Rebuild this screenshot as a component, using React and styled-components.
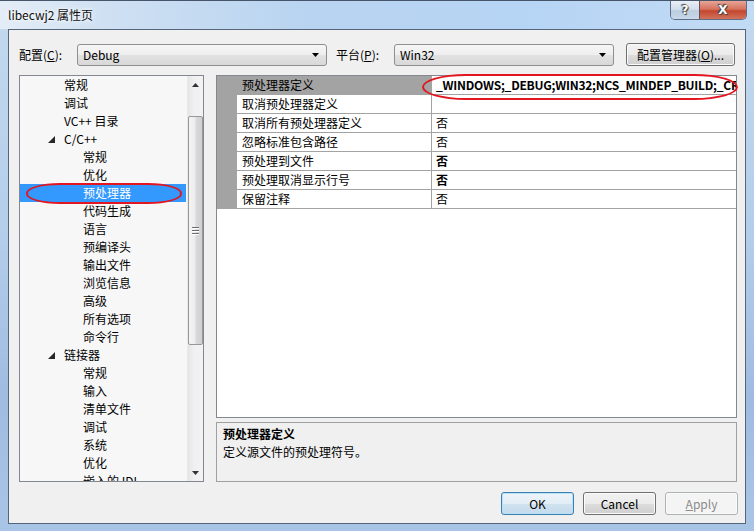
import React from 'react'
import styled, { createGlobalStyle } from 'styled-components'

const GlobalStyle = createGlobalStyle`
  html, body { margin: 0; padding: 0; background: #fff; }
  body {
    font-family: "Noto Sans CJK SC", "Noto Sans", sans-serif;
    font-size: 12px;
    color: #000;
  }
  * { box-sizing: border-box; }
`

const Window = styled.div`
  width: 754px;
  height: 531px;
  display: flex;
  flex-direction: column;
  padding: 0 8px 7px 8px;
  overflow: hidden;
  border-top: 1px solid #46556a;
  background: linear-gradient(180deg, #c4d9ef 0%, #b3cdea 45%, #9fbbe0 75%, #a9c5e6 100%);
`

const TitleBar = styled.div`
  height: 28px;
  margin: 0 -8px;
  padding-left: 8px;
  display: flex;
  justify-content: space-between;
  align-items: flex-start;
  background: linear-gradient(90deg, #e4edf7 0%, #cfe0f2 14%, #b9d4f1 40%, #b6d4f4 70%, #c2dbf5 100%);
`

const Caption = styled.div`
  line-height: 28px;
  font-size: 12px;
  color: #101010;
  text-shadow: 0 0 6px #fff, 0 0 3px #fff;
`

const Controls = styled.div`
  display: flex;
  margin-right: 7px;
  height: 19px;
  border: 1px solid #5d6e86;
  border-top: none;
  border-radius: 0 0 5px 5px;
  overflow: hidden;
`

const CtrlButton = styled.div`
  width: ${p => p.$w}px;
  display: flex;
  align-items: center;
  justify-content: center;
  font-family: "DejaVu Sans", sans-serif;
  font-weight: bold;
  color: #fff;
  font-size: ${p => p.$fs}px;
  text-shadow: 0 0 1px #333, 1px 1px 1px #444, -1px -1px 1px #444;
  background: ${p => p.$close
    ? 'linear-gradient(180deg, #e7a597 0%, #d6735e 45%, #c4462f 55%, #d2735d 100%)'
    : 'linear-gradient(180deg, #e8eef5 0%, #d3dfec 45%, #bccde0 55%, #c9d8ea 100%)'};
  border-left: ${p => p.$close ? '1px solid #6a4e55' : 'none'};
`

const Client = styled.div`
  flex: 1;
  display: flex;
  flex-direction: column;
  background: #f0f0f0;
  border: 1px solid #56667a;
  padding: 13px 7px 0 10px;
`

const TopRow = styled.div`
  display: flex;
  align-items: center;
  height: 23px;
`

const Label = styled.div`
  width: 58px;
  margin-left: ${p => p.$ml || 0}px;
  u { text-decoration: underline; }
`

const Combo = styled.div`
  width: ${p => p.$w}px;
  height: 22px;
  display: flex;
  align-items: center;
  justify-content: space-between;
  padding: 0 7px 0 5px;
  border: 1px solid #8e8f8f;
  border-radius: 3px;
  background: linear-gradient(180deg, #f6f6f6 0%, #eeeeee 50%, #e2e2e2 51%, #d8d8d8 100%);
  font-family: "Noto Sans CJK SC", "Noto Sans", sans-serif;
`

const Arrow = ({ down = true, color = '#000' }) => (
  <svg width="7" height="4" viewBox="0 0 7 4">
    <polygon points={down ? '0,0 7,0 3.5,4' : '0,4 7,4 3.5,0'} fill={color} />
  </svg>
)

const PushButton = styled.button`
  width: ${p => p.$w || 73}px;
  height: 23px;
  margin-left: ${p => p.$ml || 0}px;
  padding: 0;
  font-family: "Noto Sans CJK SC", "Noto Sans", sans-serif;
  font-size: 12px;
  color: ${p => p.$disabled ? '#8b8b8b' : '#000'};
  border: 1px solid ${p => p.$default ? '#3c7fb1' : p.$disabled ? '#adb2b5' : '#707070'};
  border-radius: 3px;
  box-shadow: inset 0 0 0 1px ${p => p.$default ? '#b7e2f7' : '#fbfbfb'};
  background: ${p => p.$disabled
    ? '#f4f4f4'
    : p.$default
      ? 'linear-gradient(180deg, #edf4f9 0%, #e2edf5 50%, #d0e2ef 51%, #c4dbec 100%)'
      : 'linear-gradient(180deg, #f2f2f2 0%, #ebebeb 50%, #dddddd 51%, #cfcfcf 100%)'};
  u { text-decoration: underline; }
`

const Main = styled.div`
  display: flex;
  margin-top: 9px;
  height: 407px;
`

const Tree = styled.div`
  position: relative;
  width: 185px;
  height: 100%;
  display: flex;
  border: 1px solid #828790;
  background: #f7f7f7;
`

const TreeList = styled.div`
  flex: 1;
  overflow: hidden;
`

const TreeRow = styled.div`
  height: 18px;
  line-height: 18px;
  display: flex;
  align-items: center;
  padding-left: ${p => (p.$level === 1 ? 44 : 63)}px;
  margin-right: 1px;
  white-space: nowrap;
  background: ${p => p.$selected ? '#3399ff' : 'transparent'};
  color: ${p => p.$selected ? '#fff' : '#000'};
`

const Caret = styled.svg`
  margin-left: -16px;
  margin-right: 9px;
`

const ScrollBar = styled.div`
  width: 16px;
  display: flex;
  flex-direction: column;
  align-items: center;
  background: linear-gradient(90deg, #e5e5e5 0%, #f0f0f0 40%, #f2f2f2 100%);
  border-left: 1px solid #e9e9e9;
`

const ScrollArrow = styled.div`
  height: 17px;
  width: 100%;
  display: flex;
  align-items: center;
  justify-content: center;
`

const Thumb = styled.div`
  margin-top: 23px;
  width: 15px;
  height: 229px;
  border: 1px solid #979797;
  border-radius: 2px;
  display: flex;
  flex-direction: column;
  align-items: center;
  justify-content: center;
  gap: 2px;
  background: linear-gradient(90deg, #f4f4f4 0%, #ececec 45%, #d9d9d9 55%, #cfcfcf 100%);
`

const Grip = styled.div`
  width: 7px;
  height: 1px;
  background: #6d6d6d;
  box-shadow: 0 1px 0 #fff;
`

const Filler = styled.div`
  flex: 1;
`

const RightCol = styled.div`
  margin-left: 12px;
  width: 521px;
  display: flex;
  flex-direction: column;
`

const Grid = styled.div`
  position: relative;
  height: 344px;
  border: 1px solid #828790;
  background: #fff;
`

const PropRow = styled.div`
  display: grid;
  grid-template-columns: 20px 195px 1fr;
  height: 19px;
`

const Gutter = styled.div`
  background: #a3a3a3;
`

const NameCell = styled.div`
  padding-left: 5px;
  line-height: 18px;
  border-bottom: 1px solid #a3a3a3;
  border-right: 1px solid #a3a3a3;
  background: ${p => p.$active ? '#a3a3a3' : '#fff'};
  white-space: nowrap;
`

const ValueCell = styled.div`
  padding-left: 4px;
  line-height: 18px;
  border-bottom: 1px solid #a3a3a3;
  font-weight: ${p => p.$bold ? 'bold' : 'normal'};
  letter-spacing: ${p => p.$tight ? '-0.25px' : 'normal'};
  white-space: nowrap;
  overflow: hidden;
`

const Ellipse = styled.div`
  position: absolute;
  left: ${p => p.$x}px;
  top: ${p => p.$y}px;
  width: ${p => p.$w}px;
  height: ${p => p.$h}px;
  border: 2px solid #e3161f;
  border-radius: ${p => p.$r};
  pointer-events: none;
`

const Description = styled.div`
  margin-top: 4px;
  height: 60px;
  border: 1px solid #a0a0a0;
  background: #f0f0f0;
  padding: 2px 6px 0;
  line-height: 18px;
`

const DescTitle = styled.div`
  font-weight: bold;
`

const ButtonRow = styled.div`
  display: flex;
  justify-content: flex-end;
  gap: 9px;
  margin-top: 10px;
`

const treeItems = [
  { label: '常规', level: 1 },
  { label: '调试', level: 1 },
  { label: 'VC++ 目录', level: 1 },
  { label: 'C/C++', level: 1, expanded: true },
  { label: '常规', level: 2 },
  { label: '优化', level: 2 },
  { label: '预处理器', level: 2, selected: true },
  { label: '代码生成', level: 2 },
  { label: '语言', level: 2 },
  { label: '预编译头', level: 2 },
  { label: '输出文件', level: 2 },
  { label: '浏览信息', level: 2 },
  { label: '高级', level: 2 },
  { label: '所有选项', level: 2 },
  { label: '命令行', level: 2 },
  { label: '链接器', level: 1, expanded: true },
  { label: '常规', level: 2 },
  { label: '输入', level: 2 },
  { label: '清单文件', level: 2 },
  { label: '调试', level: 2 },
  { label: '系统', level: 2 },
  { label: '优化', level: 2 },
  { label: '嵌入的 IDL', level: 2 },
]

const props = [
  { name: '预处理器定义', value: '_WINDOWS;_DEBUG;WIN32;NCS_MINDEP_BUILD;_CRT_SECURE_NO_WARNINGS', bold: true, active: true, tight: true },
  { name: '取消预处理器定义', value: '' },
  { name: '取消所有预处理器定义', value: '否' },
  { name: '忽略标准包含路径', value: '否' },
  { name: '预处理到文件', value: '否', bold: true },
  { name: '预处理取消显示行号', value: '否', bold: true },
  { name: '保留注释', value: '否' },
]

const App = () => {
  return (
    <>
      <GlobalStyle />
      <Window>
        <TitleBar>
          <Caption>libecwj2 属性页</Caption>
          <Controls>
            <CtrlButton $w={28} $fs={12}>?</CtrlButton>
            <CtrlButton $w={47} $fs={12} $close>X</CtrlButton>
          </Controls>
        </TitleBar>
        <Client>
          <TopRow>
            <Label>配置(<u>C</u>):</Label>
            <Combo $w={250}>
              <span>Debug</span>
              <Arrow />
            </Combo>
            <Label $ml={9}>平台(<u>P</u>):</Label>
            <Combo $w={220}>
              <span>Win32</span>
              <Arrow />
            </Combo>
            <PushButton $w={109} $ml={12}>配置管理器(<u>O</u>)...</PushButton>
          </TopRow>
          <Main>
            <Tree>
              <TreeList>
                {treeItems.map((item, i) => (
                  <TreeRow key={i} $level={item.level} $selected={item.selected}>
                    {item.expanded && (
                      <Caret width="7" height="7" viewBox="0 0 7 7">
                        <polygon points="7,0 7,7 0,7" fill="#262626" />
                      </Caret>
                    )}
                    {item.label}
                  </TreeRow>
                ))}
              </TreeList>
              <ScrollBar>
                <ScrollArrow><Arrow down={false} color="#333" /></ScrollArrow>
                <Thumb>
                  <Grip />
                  <Grip />
                  <Grip />
                </Thumb>
                <Filler />
                <ScrollArrow><Arrow color="#333" /></ScrollArrow>
              </ScrollBar>
              <Ellipse $x={6} $y={107} $w={156} $h={21} $r="34px / 10px" />
            </Tree>
            <RightCol>
              <Grid>
                {props.map((p, i) => (
                  <PropRow key={i}>
                    <Gutter />
                    <NameCell $active={p.active}>{p.name}</NameCell>
                    <ValueCell $bold={p.bold} $tight={p.tight}>{p.value}</ValueCell>
                  </PropRow>
                ))}
                <Ellipse $x={205} $y={-2} $w={316} $h={26} $r="44px / 13px" />
              </Grid>
              <Description>
                <DescTitle>预处理器定义</DescTitle>
                <div>定义源文件的预处理符号。</div>
              </Description>
            </RightCol>
          </Main>
          <ButtonRow>
            <PushButton $default>OK</PushButton>
            <PushButton>Cancel</PushButton>
            <PushButton $disabled><u>A</u>pply</PushButton>
          </ButtonRow>
        </Client>
      </Window>
    </>
  )
}

export default App
